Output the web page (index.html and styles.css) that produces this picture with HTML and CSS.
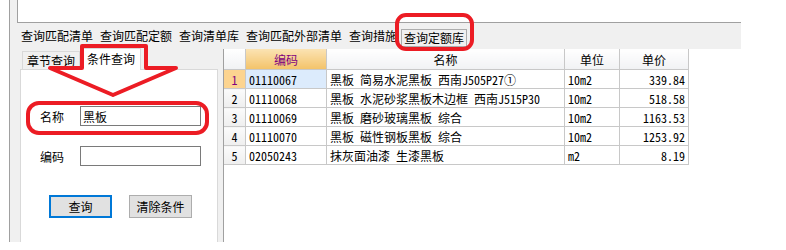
FILE: index.html
```html
<!DOCTYPE html>
<html lang="zh-CN">
<head>
    <meta charset="UTF-8">
    <title>查询定额库</title>
    <link rel="stylesheet" href="styles.css">
</head>
<body>
    <div class="window">
        <div class="top-pane"></div>

        <!-- Query type tabs -->
        <div class="menu-tabs">
            <span class="menu-item">查询匹配清单</span>
            <span class="menu-item">查询匹配定额</span>
            <span class="menu-item">查询清单库</span>
            <span class="menu-item">查询匹配外部清单</span>
            <span class="menu-item">查询措施</span>
            <span class="menu-item active">查询定额库</span>
        </div>

        <div class="content">
            <!-- Left: search conditions -->
            <div class="side">
                <div class="side-tabs">
                    <span class="side-tab">章节查询</span>
                    <span class="side-tab selected">条件查询</span>
                </div>
                <div class="side-pane">
                    <div class="field">
                        <label for="name">名称</label>
                        <input type="text" id="name" value="黑板">
                    </div>
                    <div class="field">
                        <label for="code">编码</label>
                        <input type="text" id="code">
                    </div>
                    <div class="buttons">
                        <button class="btn default">查询</button>
                        <button class="btn">清除条件</button>
                    </div>
                </div>
            </div>

            <!-- Right: result grid -->
            <div class="grid">
                <table>
                    <thead>
                        <tr>
                            <th class="rowhead"></th>
                            <th class="sorted col-code">编码</th>
                            <th class="col-name">名称</th>
                            <th class="col-unit">单位</th>
                            <th class="col-price">单价</th>
                        </tr>
                    </thead>
                    <tbody>
                        <tr class="current">
                            <td class="rowhead">1</td>
                            <td class="code">01110067</td>
                            <td>黑板 简易水泥黑板 西南J505P27①</td>
                            <td>10m2</td>
                            <td class="num">339.84</td>
                        </tr>
                        <tr>
                            <td class="rowhead">2</td>
                            <td class="code">01110068</td>
                            <td>黑板 水泥砂浆黑板木边框 西南J515P30</td>
                            <td>10m2</td>
                            <td class="num">518.58</td>
                        </tr>
                        <tr>
                            <td class="rowhead">3</td>
                            <td class="code">01110069</td>
                            <td>黑板 磨砂玻璃黑板 综合</td>
                            <td>10m2</td>
                            <td class="num">1163.53</td>
                        </tr>
                        <tr>
                            <td class="rowhead">4</td>
                            <td class="code">01110070</td>
                            <td>黑板 磁性钢板黑板 综合</td>
                            <td>10m2</td>
                            <td class="num">1253.92</td>
                        </tr>
                        <tr>
                            <td class="rowhead">5</td>
                            <td class="code">02050243</td>
                            <td>抹灰面油漆 生漆黑板</td>
                            <td>m2</td>
                            <td class="num">8.19</td>
                        </tr>
                    </tbody>
                </table>
            </div>
        </div>
    </div>

    <!-- Red hand-drawn annotations over the screenshot -->
    <svg class="marks" width="786" height="250" viewBox="0 0 786 250">
        <rect x="397" y="15" width="75" height="34" rx="9" />
        <polygon points="82,46 146,46 146,68 176,68 113,95 50,68 82,68" />
        <rect x="28" y="103" width="179" height="30" rx="11" />
    </svg>
</body>
</html>
```

FILE: styles.css
```css
body {
    margin: 0;
    width: 786px;
    height: 250px;
    background: #fff;
    font-family: "Noto Sans CJK SC", "Microsoft YaHei", sans-serif;
    font-size: 12px;
    color: #000;
    position: relative;
    overflow: hidden;
}
.window {
    margin-left: 9px;
    width: 731px;
    height: 242px;
    background: #f0f0f0;
    border-left: 1px solid #a0a0a0;
}
.top-pane {
    height: 22px;
    margin-left: 7px;
    background: #fff;
    border-left: 1px solid #a0a0a0;
    border-bottom: 1px solid #a0a0a0;
}

/* Query type tabs */
.menu-tabs {
    display: flex;
    align-items: center;
    height: 25px;
    padding-left: 11px;
}
.menu-item {
    line-height: 16px;
    margin-right: 7px;
    white-space: nowrap;
}
.menu-item.active {
    margin-left: -3px;
    padding: 0 2px;
    border: 1px solid #adadad;
    background: #f0f0f0;
    line-height: 16px;
    margin-top: 4px;
}

.content {
    display: flex;
    height: 194px;
}

/* Left panel */
.side {
    width: 212px;
    padding-left: 10px;
    box-sizing: border-box;
}
.side-tabs {
    display: flex;
    align-items: flex-end;
    height: 21px;
    padding-left: 2px;
}
.side-tab {
    height: 17px;
    line-height: 17px;
    padding: 0 4px;
    border: 1px solid #d9d9d9;
    border-bottom: none;
    background: #f0f0f0;
}
.side-tab.selected {
    height: 21px;
    line-height: 20px;
    background: #fff;
    margin-left: 1px;
    margin-bottom: -1px;
    padding: 0 5px;
}
.side-pane {
    width: 198px;
    height: 173px;
    box-sizing: border-box;
    background: #fff;
    border: 1px solid #d9d9d9;
    border-bottom: none;
    padding: 36px 0 0 19px;
}
.field {
    display: flex;
    align-items: center;
    margin-bottom: 20px;
}
.field label {
    width: 40px;
}
.field input {
    width: 121px;
    height: 20px;
    box-sizing: border-box;
    border: 1px solid #7a7a7a;
    padding: 0 2px;
    font-family: inherit;
    font-size: 12px;
    outline: none;
}
.buttons {
    display: flex;
    gap: 17px;
    padding-left: 9px;
    margin-top: 29px;
}
.btn {
    width: 63px;
    height: 23px;
    box-sizing: border-box;
    background: #e1e1e1;
    border: 1px solid #adadad;
    font-family: inherit;
    font-size: 12px;
    padding: 0;
}
.btn.default {
    border: 2px solid #0078d7;
}

/* Result grid */
.grid {
    flex: 1;
    margin-left: 1px;
    margin-top: 1px;
    background: #fff;
    border-left: 1px solid #a0a0a0;
}
table {
    border-collapse: collapse;
    font-feature-settings: "hwid";
}
th, td {
    border: 1px solid #c8c8c8;
    padding: 0 3px;
    white-space: nowrap;
    text-align: left;
}
th {
    height: 20px;
    font-weight: normal;
    text-align: center;
    background: linear-gradient(#ffffff, #f1f2f4);
    border-top: none;
}
td {
    height: 18px;
}
th.rowhead {
    width: 15px;
}
.col-code { width: 74px; }
.col-name { width: 231px; }
.col-unit { width: 48px; }
.col-price { width: 62px; }
th.sorted {
    background: linear-gradient(#fbe3b3, #f3c36a);
    color: #800080;
}
td.rowhead {
    text-align: center;
    background: linear-gradient(#fbfbfb, #eeeeee);
    border-left: none;
}
th.rowhead {
    border-left: none;
}
tr.current td.rowhead {
    background: #fcd490;
    color: #800080;
}
tr.current td.code {
    background: #dcebfc;
}
td.num {
    text-align: right;
}

/* Annotations */
.marks {
    position: absolute;
    left: 0;
    top: 0;
    pointer-events: none;
}
.marks rect,
.marks polygon {
    fill: none;
    stroke: #ec1c24;
    stroke-width: 4;
    stroke-linejoin: round;
}
```
